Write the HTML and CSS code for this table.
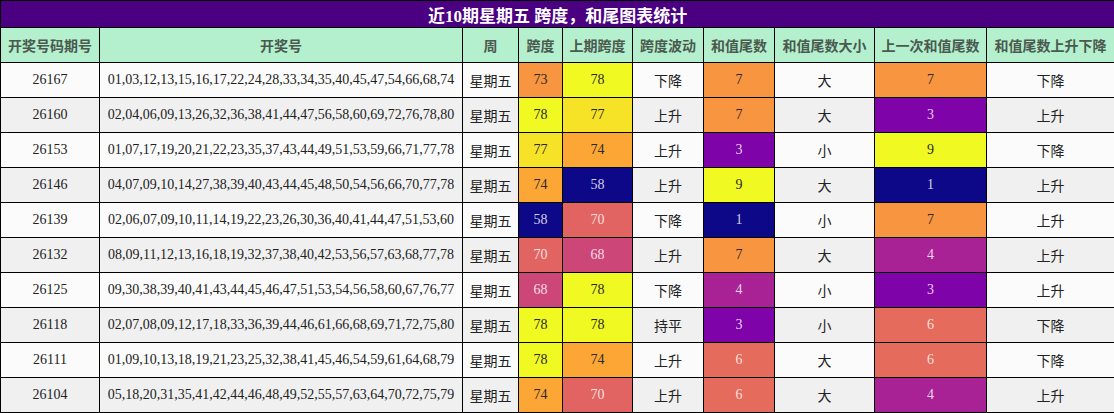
FILE: index.html
```html
<!DOCTYPE html>
<html lang="zh">
<head>
<meta charset="utf-8">
<title>近10期星期五 跨度，和尾图表统计</title>
<link rel="stylesheet" href="styles.css">
</head>
<body>
<table class="stats">
  <colgroup>
    <col class="w-issue"><col class="w-nums"><col class="w-week"><col class="w-span"><col class="w-prev">
    <col class="w-wave"><col class="w-tail"><col class="w-size"><col class="w-ptail"><col class="w-trend">
  </colgroup>
  <thead>
    <tr class="title-row"><th colspan="10">近10期星期五 跨度，和尾图表统计</th></tr>
    <tr class="head-row">
      <th>开奖号码期号</th><th>开奖号</th><th>周</th><th>跨度</th><th>上期跨度</th>
      <th>跨度波动</th><th>和值尾数</th><th>和值尾数大小</th><th>上一次和值尾数</th><th>和值尾数上升下降</th>
    </tr>
  </thead>
  <tbody>
    <tr><td>26167</td><td>01,03,12,13,15,16,17,22,24,28,33,34,35,40,45,47,54,66,68,74</td><td>星期五</td><td class="s73">73</td><td class="s78">78</td><td>下降</td><td class="t7">7</td><td>大</td><td class="t7">7</td><td>下降</td></tr>
    <tr><td>26160</td><td>02,04,06,09,13,26,32,36,38,41,44,47,56,58,60,69,72,76,78,80</td><td>星期五</td><td class="s78">78</td><td class="s77">77</td><td>上升</td><td class="t7">7</td><td>大</td><td class="t3">3</td><td>上升</td></tr>
    <tr><td>26153</td><td>01,07,17,19,20,21,22,23,35,37,43,44,49,51,53,59,66,71,77,78</td><td>星期五</td><td class="s77">77</td><td class="s74">74</td><td>上升</td><td class="t3">3</td><td>小</td><td class="t9">9</td><td>下降</td></tr>
    <tr><td>26146</td><td>04,07,09,10,14,27,38,39,40,43,44,45,48,50,54,56,66,70,77,78</td><td>星期五</td><td class="s74">74</td><td class="s58">58</td><td>上升</td><td class="t9">9</td><td>大</td><td class="t1">1</td><td>上升</td></tr>
    <tr><td>26139</td><td>02,06,07,09,10,11,14,19,22,23,26,30,36,40,41,44,47,51,53,60</td><td>星期五</td><td class="s58">58</td><td class="s70">70</td><td>下降</td><td class="t1">1</td><td>小</td><td class="t7">7</td><td>上升</td></tr>
    <tr><td>26132</td><td>08,09,11,12,13,16,18,19,32,37,38,40,42,53,56,57,63,68,77,78</td><td>星期五</td><td class="s70">70</td><td class="s68">68</td><td>上升</td><td class="t7">7</td><td>大</td><td class="t4">4</td><td>上升</td></tr>
    <tr><td>26125</td><td>09,30,38,39,40,41,43,44,45,46,47,51,53,54,56,58,60,67,76,77</td><td>星期五</td><td class="s68">68</td><td class="s78">78</td><td>下降</td><td class="t4">4</td><td>小</td><td class="t3">3</td><td>上升</td></tr>
    <tr><td>26118</td><td>02,07,08,09,12,17,18,33,36,39,44,46,61,66,68,69,71,72,75,80</td><td>星期五</td><td class="s78">78</td><td class="s78">78</td><td>持平</td><td class="t3">3</td><td>小</td><td class="t6">6</td><td>下降</td></tr>
    <tr><td>26111</td><td>01,09,10,13,18,19,21,23,25,32,38,41,45,46,54,59,61,64,68,79</td><td>星期五</td><td class="s78">78</td><td class="s74">74</td><td>上升</td><td class="t6">6</td><td>大</td><td class="t6">6</td><td>下降</td></tr>
    <tr><td>26104</td><td>05,18,20,31,35,41,42,44,46,48,49,52,55,57,63,64,70,72,75,79</td><td>星期五</td><td class="s74">74</td><td class="s70">70</td><td>上升</td><td class="t6">6</td><td>大</td><td class="t4">4</td><td>上升</td></tr>
  </tbody>
</table>
</body>
</html>
```
FILE: styles.css
```css
html, body {
  margin: 0;
  padding: 0;
  background: #ffffff;
}

.stats {
  width: 1114px;
  border-collapse: collapse;
  table-layout: fixed;
  font-family: "Liberation Serif", "Noto Sans CJK SC", serif;
  font-size: 14px;
  color: #222222;
}

.w-issue { width: 99px; }
.w-nums { width: 363px; }
.w-week { width: 56px; }
.w-span { width: 44px; }
.w-prev { width: 70px; }
.w-wave { width: 71px; }
.w-tail { width: 71px; }
.w-size { width: 100px; }
.w-ptail { width: 112px; }
.w-trend { width: 128px; }

.stats th,
.stats td {
  border: 1px solid #000000;
  padding: 0;
  text-align: center;
  vertical-align: middle;
  white-space: nowrap;
  overflow: hidden;
}

.title-row th {
  height: 26px;
  background: #4b0082;
  color: #ffffff;
  font-size: 17px;
  font-weight: bold;
}

.head-row th {
  height: 34px;
  background: #b4efce;
  color: #4a5a4f;
  font-family: "Noto Sans CJK SC", sans-serif;
  font-weight: bold;
  font-size: 14px;
}

.stats td {
  height: 34px;
}

.stats tbody tr:nth-child(odd) { background: #fbfbfb; }
.stats tbody tr:nth-child(even) { background: #f0f0f0; }

.light { color: rgba(255,255,255,0.82); }

/* span scale (58..78) */
.stats td.s58 { background: #0d0887; color: rgba(255,255,255,0.82); }
.stats td.s68 { background: #cc4778; color: rgba(255,255,255,0.82); }
.stats td.s70 { background: #e16462; color: rgba(255,255,255,0.82); }
.stats td.s73 { background: #f89540; color: #2a2a2a; }
.stats td.s74 { background: #fca636; color: #2a2a2a; }
.stats td.s77 { background: #f6e226; color: #2a2a2a; }
.stats td.s78 { background: #f0f921; color: #2a2a2a; }

/* tail scale (1..9) */
.stats td.t1 { background: #0d0887; color: rgba(255,255,255,0.82); }
.stats td.t3 { background: #7e03a8; color: rgba(255,255,255,0.82); }
.stats td.t4 { background: #a82296; color: rgba(255,255,255,0.82); }
.stats td.t6 { background: #e56b5d; color: rgba(255,255,255,0.82); }
.stats td.t7 { background: #f89540; color: #2a2a2a; }
.stats td.t9 { background: #f0f921; color: #2a2a2a; }
```
